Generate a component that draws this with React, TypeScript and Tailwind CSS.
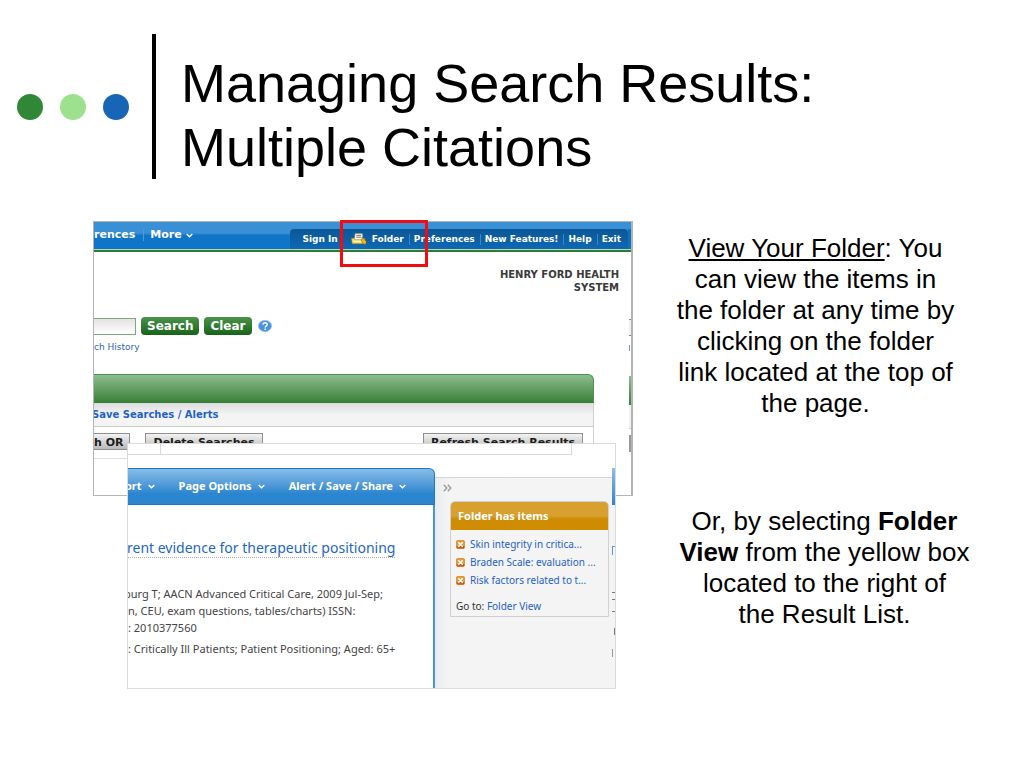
import type { ReactNode } from "react";

function Chevron() {
  return (
    <svg className="h-[5px] w-[7px] shrink-0" viewBox="0 0 7 5" fill="none" stroke="currentColor" strokeWidth="1.4" aria-hidden="true">
      <path d="M0.7 0.9 3.5 3.7 6.3 0.9" />
    </svg>
  );
}

function FolderIcon() {
  return (
    <svg className="h-3 w-4 shrink-0" viewBox="0 0 16 12" aria-hidden="true">
      <path d="M4.2 0.8h7l0.6 6H3.6z" fill="#fffdf2" stroke="#c9b98a" strokeWidth="0.6" />
      <path d="M5.4 2.4h4.8M5.2 4.2h5.2" stroke="#6d6a62" strokeWidth="0.9" />
      <path d="M0.6 5.6h2.6l0.8 1.2h7.6l0.6-1.2h1.4l0.6 5H1.4z" fill="#f8dc6a" stroke="#d9a520" strokeWidth="0.6" />
      <path d="M2.6 8.4h8.4" stroke="#fff8d0" strokeWidth="1.2" />
      <path d="m11.4 4.4 4 4.4-0.6 2.4h-2l-2.4-3.4z" fill="#f4c020" stroke="#7a5510" strokeWidth="0.6" />
    </svg>
  );
}

function HelpIcon() {
  return (
    <svg className="h-3 w-3.5 shrink-0" viewBox="0 0 14 12" aria-hidden="true">
      <ellipse cx="7" cy="6" rx="6.6" ry="5.7" fill="#4a92dd" stroke="#9cc4ee" strokeWidth="0.8" />
      <path d="M4.9 4.6C5 2.2 9.2 2.2 9.2 4.5c0 1.5-2 1.5-2 3M7.2 8.6v1.3" fill="none" stroke="#fff" strokeWidth="1.5" />
    </svg>
  );
}

function RemoveIcon() {
  return (
    <svg className="h-[9px] w-[9px]" viewBox="0 0 9 9" aria-hidden="true">
      <rect x="0.3" y="0.3" width="8.4" height="8.4" rx="2" fill="#e79a2e" stroke="#c8742a" strokeWidth="0.6" />
      <path d="M0.6 6h7.8v1a1.6 1.6 0 0 1-1.6 1.6H2.2A1.6 1.6 0 0 1 0.6 7z" fill="#cc5a1c" />
      <path d="m2.3 2.3 4.4 4.4m0-4.4L2.3 6.7" stroke="#fff" strokeWidth="1.6" />
    </svg>
  );
}

function TopLink({ children, divided = true }: { children: ReactNode; divided?: boolean }) {
  return (
    <a href="#" className={divided ? "border-l border-[#3f86c0] pl-1" : ""}>
      {children}
    </a>
  );
}

function GreyButton({ children, className }: { children: ReactNode; className: string }) {
  return (
    <button
      type="button"
      className={`h-[17px] border border-[#8f8f8f] bg-linear-to-b from-[#f2f2f2] to-[#b9b9b9] text-center text-[11px] leading-[17px] font-bold whitespace-nowrap text-[#1c1c1c] ${className}`}
    >
      {children}
    </button>
  );
}

function SearchShot() {
  return (
    <div className="relative">
      <div className="flex h-[275px] flex-col overflow-hidden border border-r-2 border-[#b4b4b4] bg-white font-['DejaVu_Sans',sans-serif]">
        <nav className="flex h-[27px] shrink-0 justify-between bg-linear-to-b from-[#3a90d4] from-40% to-[#0f75c8] to-50% font-bold text-white">
          <div className="flex h-[26px] items-center text-[11px]">
            <a href="#">rences</a>
            <a href="#" className="ml-2 flex items-center gap-1 border-l border-[#4b9ada] pl-[6px] leading-3">
              More <Chevron />
            </a>
          </div>
          <div className="flex pt-[7px]">
            <div className="flex items-center gap-[5px] rounded-t-[4px] bg-linear-to-b from-[#0b5796] to-[#0e68b5] pr-[7px] pl-3 text-[9px] leading-[11px] whitespace-nowrap">
              <TopLink divided={false}>Sign In</TopLink>
              <a href="#" className="ml-2 flex items-center gap-[5px]">
                <FolderIcon /> Folder
              </a>
              <TopLink>Preferences</TopLink>
              <TopLink>New Features!</TopLink>
              <TopLink>Help</TopLink>
              <TopLink>Exit</TopLink>
            </div>
            <span className="w-[3px] bg-[#0f70c0]" />
          </div>
        </nav>
        <div className="h-[3px] shrink-0 border-t border-[#b6d7b0] bg-[#2b7d35]" />
        <div className="flex grow">
          <div className="min-w-0 grow">
            <p className="pt-4 pr-[10px] text-right text-[10px] leading-[13px] font-bold text-[#3a3a3a]">
              HENRY FORD HEALTH
              <br />
              SYSTEM
            </p>
            <div className="mt-[23px] flex items-center gap-[5px] text-[12px] font-bold text-white">
              <input
                type="text"
                aria-label="Search terms"
                className="h-[17px] w-[42px] border border-l-0 border-[#7fa67f] bg-linear-to-b from-[#e3e3e3] to-white"
              />
              <button type="button" className="h-[18px] rounded-[4px] bg-linear-to-b from-[#4b934b] to-[#156418] px-[6px] leading-[18px]">
                Search
              </button>
              <button type="button" className="h-[18px] rounded-[4px] bg-linear-to-b from-[#4b934b] to-[#156418] px-[6px] leading-[18px]">
                Clear
              </button>
              <a href="#" aria-label="Help" className="ml-px">
                <HelpIcon />
              </a>
            </div>
            <a href="#" className="mt-[6px] block text-[9px] leading-3 text-[#2a66b8]">
              ch History
            </a>
            <div className="mt-[21px] mr-[35px] h-[29px] rounded-tr-[6px] border-t border-r border-[#4f8f52] bg-linear-to-b from-[#8dbc90] to-[#377f35]" />
            <div className="mr-[35px] border-r border-[#cfcfcf]">
              <div className="h-6 border-b border-[#cccccc] bg-linear-to-b from-[#dcdcdf] to-[#f4f4f4] to-50% text-[10px] leading-6 font-bold text-[#1f61c4]">
                <a href="#" className="-ml-[2px]">Save Searches / Alerts</a>
              </div>
              <div className="flex justify-between border-b border-[#dddddd] pt-[6px] pr-[10px] pb-2">
                <div className="flex gap-[15px]">
                  <GreyButton className="w-9 border-l-0 pr-[9px]">h OR</GreyButton>
                  <GreyButton className="w-[118px]">Delete Searches</GreyButton>
                </div>
                <GreyButton className="w-40">Refresh Search Results</GreyButton>
              </div>
            </div>
          </div>
          <div className="w-[2px] shrink-0 pt-[67px]">
            <div className="h-[17px] border-y border-[#888888] bg-[#eeeeee]" />
            <div className="mt-[9px] h-[6px] border-l border-[#7d9fd0]" />
            <div className="mt-[25px] h-[29px] bg-linear-to-b from-[#8dbc90] to-[#377f35]" />
            <div className="h-6 border-b border-[#cccccc] bg-[#f0f0f4]" />
            <div className="mt-[6px] h-[17px] bg-[#999999]" />
          </div>
        </div>
      </div>
      <div className="absolute -top-px left-[247px] h-[47px] w-[88px] border-[3px] border-[#f50a0f]" />
    </div>
  );
}

const folderItems = ["Skin integrity in critica...", "Braden Scale: evaluation ...", "Risk factors related to t..."];

function ResultShot() {
  return (
    <div className="relative z-10 -mt-[53px] mr-[17px] ml-[34px] flex h-[246px] flex-col overflow-hidden border border-[#dadada] bg-white font-['Noto_Sans',sans-serif]">
      <div className="mr-[43px] h-[11px] shrink-0 border-r border-b border-[#d8d8d8] pl-8">
        <div className="h-full border-l border-[#d8d8d8]" />
      </div>
      <div className="flex grow pt-[13px]">
        <div className="flex w-[307px] flex-col">
          <nav className="flex h-[37px] items-center rounded-tr-[6px] border-t border-r border-b border-[#1d78c4] bg-linear-to-b from-[#86bde8] to-[#2c86cf] to-70% text-[11px] font-bold whitespace-nowrap text-white">
            <a href="#" className="-ml-[3px] flex items-center gap-[6px]">
              ort <Chevron />
            </a>
            <a href="#" className="ml-6 flex items-center gap-[6px]">
              Page Options <Chevron />
            </a>
            <a href="#" className="ml-6 flex items-center gap-[6px]">
              Alert / Save / Share <Chevron />
            </a>
          </nav>
          <div className="grow border-r-2 border-[#4a97d6] pt-[30px] whitespace-nowrap">
            <a href="#" className="-ml-px inline-block border-b border-dotted border-[#a8a8a8] text-[14px] leading-[19px] text-[#1d66c0]">
              rent evidence for therapeutic positioning
            </a>
            <p className="pt-[26px] text-[11px] leading-[17px] text-[#444444]">
              <span className="-ml-1">burg T; AACN Advanced Critical Care, 2009 Jul-Sep;</span>
              <br />
              n, CEU, exam questions, tables/charts) ISSN:
              <br />: 2010377560
            </p>
            <p className="pt-1 text-[11px] leading-[17px] text-[#444444]">: Critically Ill Patients; Patient Positioning; Aged: 65+</p>
          </div>
        </div>
        <aside className="mt-[9px] grow border-t border-[#d4d4d4] bg-linear-to-r from-[#e9ecef] to-[#f4f4f4] to-8% pr-[3px] pl-[15px]">
          <svg className="mt-[6px] -ml-[7px] h-2 w-[9px]" viewBox="0 0 9 8" fill="none" stroke="#9b9b9b" strokeWidth="1.4" aria-hidden="true">
            <path d="m0.8 0.8 3 3.2-3 3.2M4.8 0.8l3 3.2-3 3.2" />
          </svg>
          <section className="mt-[9px] overflow-hidden rounded-t-[5px] border border-[#d0d0d0] text-[10px]">
            <h2 className="bg-linear-to-b from-[#d8a02e] from-50% to-[#cf8c00] to-60% px-[7px] text-[11px] leading-7 font-bold text-white">
              Folder has items
            </h2>
            <ul className="px-[5px] pt-[5px] leading-[18px] text-[#1f61c4]">
              {folderItems.map((item) => (
                <li key={item} className="flex items-center gap-[5px] whitespace-nowrap">
                  <button type="button" aria-label="Remove">
                    <RemoveIcon />
                  </button>
                  <a href="#">{item}</a>
                </li>
              ))}
            </ul>
            <p className="px-[5px] pt-[10px] pb-[2px] text-[#333333]">
              Go to: <a href="#" className="text-[#1f61c4]">Folder View</a>
            </p>
          </section>
        </aside>
        <div className="flex w-[3px] shrink-0 flex-col">
          <div className="h-[37px] bg-linear-to-b from-[#86bde8] to-[#2c86cf]" />
          <div className="grow bg-[#f4f4f4]">
            <div className="mt-[41px] h-[9px] border-t border-l border-[#5b93d2]" />
            <div className="mt-[37px] h-2 border-y border-[#777777]" />
            <div className="mt-[11px] h-[7px] border-t border-[#777777]" />
            <div className="mt-[10px] h-[7px] border-r border-[#777777]" />
            <div className="mt-[14px] h-2 border-l border-[#999999]" />
          </div>
        </div>
      </div>
    </div>
  );
}

export default function App() {
  return (
    <main className="min-h-screen bg-white pt-[34px] pb-8 font-['Liberation_Sans',Arial,sans-serif] text-black">
      <header className="flex items-center pl-[17px]">
        <div className="flex gap-[17px]">
          <span className="size-[26px] rounded-full bg-[#308837]" />
          <span className="size-[26px] rounded-full bg-[#9de08e]" />
          <span className="size-[26px] rounded-full bg-[#1766b5]" />
        </div>
        <h1 className="ml-[23px] border-l-4 border-black pt-[17px] pl-[25px] text-[54px] leading-[64px]">
          Managing Search Results:
          <br />
          Multiple Citations
        </h1>
      </header>
      <div className="mt-[42px] grid grid-cols-[540fr_391fr] pl-[93px]">
        <div>
          <SearchShot />
          <ResultShot />
        </div>
        <div className="pt-3 text-center text-[26px] leading-[31px]">
          <p className="pr-[26px]">
            <u className="decoration-2 underline-offset-2">View Your Folder</u>: You
            <br />
            can view the items in
            <br />
            the folder at any time by
            <br />
            clicking on the folder
            <br />
            link located at the top of
            <br />
            the page.
          </p>
          <p className="pt-[87px] pr-2">
            Or, by selecting <b>Folder</b>
            <br />
            <b>View</b> from the yellow box
            <br />
            located to the right of
            <br />
            the Result List.
          </p>
        </div>
      </div>
    </main>
  );
}
